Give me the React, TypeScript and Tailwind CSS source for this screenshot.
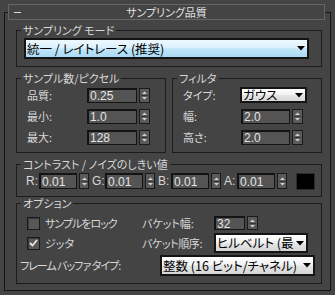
import React from 'react';

const jp = "font-['Noto_Sans_CJK_JP',sans-serif] [font-feature-settings:'palt']";
const num = "font-['Liberation_Sans',Arial,sans-serif]";
const line = 'border border-[#1c1c1c]';

function SpinArrows({ className }: { className: string }) {
  return (
    <div className={`${className} flex items-center justify-center border border-[#1a1a1a] bg-[#5a5a5a]`}>
      <svg width="7" height="11" viewBox="0 0 7 11">
        <polygon points="1,4 3.5,1.5 6,4" fill="#d0d0d0" />
        <line x1="0" y1="5.5" x2="7" y2="5.5" stroke="#3a3a3a" />
        <polygon points="1,7 6,7 3.5,9.5" fill="#d0d0d0" />
      </svg>
    </div>
  );
}

function Spinner({ value, fieldW, spinW, h }: { value: string; fieldW: string; spinW: string; h: string }) {
  return (
    <div className="flex items-center gap-[2px]">
      <div
        className={`${fieldW} ${h} flex items-center border-b border-l-2 border-r border-t-2 border-[#141414] bg-[#545454] pl-[1px] text-[12px] leading-none text-[#e4e4e4] ${num}`}
      >
        {value}
      </div>
      <SpinArrows className={`${spinW} ${h}`} />
    </div>
  );
}

function Dropdown({ text, className, blue, clip }: { text: string; className: string; blue?: boolean; clip?: boolean }) {
  const fill = blue
    ? 'bg-[linear-gradient(to_bottom,#eef8fe_0%,#dcf1fc_45%,#c2e6f9_52%,#a9d9f4_100%)]'
    : 'bg-[linear-gradient(to_bottom,#ffffff_0%,#f2f2f2_45%,#e4e4e4_55%,#d6d6d6_100%)]';
  return (
    <div className={`${className} ${fill} flex items-center border-2 border-[#141414] pl-[1px] pr-[2px] text-black`}>
      <span className={`min-w-0 flex-1 whitespace-nowrap text-[12.5px] leading-[12px] ${clip ? 'overflow-hidden py-[2px]' : ''}`}>
        {text}
      </span>
      <svg width="8" height="5" viewBox="0 0 8 5" className="ml-[2px] shrink-0">
        <polygon points="0,0 8,0 4,4.5" fill="#000" />
      </svg>
    </div>
  );
}

function Check({ checked }: { checked?: boolean }) {
  return (
    <div className="flex h-[13px] w-[13px] items-center justify-center border border-[#1a1a1a] bg-[#585858] shadow-[inset_1px_1px_0_#3a3a3a]">
      {checked && (
        <svg width="9" height="8" viewBox="0 0 9 8">
          <polyline points="1,4 3.5,6.5 8,1" fill="none" stroke="#e6e6e6" strokeWidth="1.8" />
        </svg>
      )}
    </div>
  );
}

function Legend({ text, tight }: { text: string; tight?: boolean }) {
  return (
    <legend className={`ml-[4px] px-[2px] text-[11px] ${tight ? 'leading-[12px]' : 'leading-[14px]'}`}>{text}</legend>
  );
}

export default function App() {
  const samples = [
    ['品質:', '0.25'],
    ['最小:', '1.0'],
    ['最大:', '128'],
  ];
  const channels = [
    ['R:', '0.01'],
    ['G:', '0.01'],
    ['B:', '0.01'],
    ['A:', '0.01'],
  ];

  return (
    <div className={`h-[295px] w-[335px] overflow-hidden bg-[#444444] pt-[4px] text-[11px] text-[#d8d8d8] ${jp}`}>
      <div className="relative z-10 ml-[8px] grid h-[16px] w-[317px] grid-cols-[1fr_auto_1fr] items-center border border-[#666666] bg-[#444444]">
        <div className="ml-[5px] h-[1px] w-[7px] bg-[#dcdcdc]" />
        <div className="leading-[14px] text-[#e0e0e0]">サンプリング品質</div>
        <div />
      </div>

      <div className="-mt-[8px] ml-[4px] h-[279px] w-[327px] border border-[#141414] pl-[11px] pr-[8px] pt-[10px]">
        <fieldset className={line}>
          <Legend text="サンプリング モード" />
          <div className="pb-[7px] pl-[7px] pr-[12px] pt-[1px]">
            <Dropdown blue text="統一 / レイトレース (推奨)" className="h-[21px] w-full" />
          </div>
        </fieldset>

        <div className="mt-[4px] flex gap-[6px]">
          <fieldset className={`w-[150px] min-w-0 ${line}`}>
            <Legend text="サンプル数/ピクセル" />
            <div className="flex flex-col gap-[6px] pb-[7px] pl-[10px] pt-[3px]">
              {samples.map(([label, value]) => (
                <div key={label} className="flex h-[15px] items-center">
                  <span className="w-[60px]">{label}</span>
                  <Spinner value={value} fieldW="w-[50px]" spinW="w-[11px]" h="h-[15px]" />
                </div>
              ))}
            </div>
          </fieldset>

          <fieldset className={`min-w-0 flex-1 ${line}`}>
            <Legend text="フィルタ" />
            <div className="flex flex-col gap-[6px] pb-[7px] pl-[10px] pt-[2px]">
              <div className="flex h-[16px] items-center">
                <span className="w-[57px]">タイプ:</span>
                <Dropdown text="ガウス" className="h-[16px] w-[67px]" />
              </div>
              <div className="flex h-[15px] items-center">
                <span className="w-[58px]">幅:</span>
                <Spinner value="2.0" fieldW="w-[49px]" spinW="w-[11px]" h="h-[15px]" />
              </div>
              <div className="flex h-[15px] items-center">
                <span className="w-[58px]">高さ:</span>
                <Spinner value="2.0" fieldW="w-[49px]" spinW="w-[11px]" h="h-[15px]" />
              </div>
            </div>
          </fieldset>
        </div>

        <fieldset className={`mt-[4px] ${line}`}>
          <Legend text="コントラスト / ノイズのしきい値" />
          <div className="flex h-[25px] items-start pb-[7px] pl-[9px] pt-[2px]">
            <div className="flex h-[16px] items-center gap-[3px]">
              {channels.map(([label, value]) => (
                <div key={label} className="flex items-center">
                  <span className={`w-[13px] text-[12px] leading-none ${num}`}>{label}</span>
                  <Spinner value={value} fieldW="w-[38px]" spinW="w-[10px]" h="h-[16px]" />
                </div>
              ))}
              <div className="ml-[6px] h-[17px] w-[19px] border border-[#2c2c2c] bg-black" />
            </div>
          </div>
        </fieldset>

        <fieldset className={line}>
          <Legend tight text="オプション" />
          <div className="pb-[7px] pt-[7px]">
            <div className="grid grid-cols-[115px_72px_auto] grid-rows-[14px_20px] items-center gap-y-[3px] pl-[10px]">
              <div className="flex items-center gap-[5px]">
                <Check />
                <span className="tracking-[-1px]">サンプルをロック</span>
              </div>
              <span>バケット幅:</span>
              <Spinner value="32" fieldW="w-[31px]" spinW="w-[11px]" h="h-[14px]" />

              <div className="flex items-center gap-[5px]">
                <Check checked />
                <span>ジッタ</span>
              </div>
              <span className="tracking-[-0.4px]">バケット順序:</span>
              <Dropdown clip text="ヒルベルト (最適)" className="h-[20px] w-[94px]" />
            </div>
            <div className="mt-[2px] flex items-center pl-[3px]">
              <span className="w-[140px] tracking-[-1px]">フレーム バッファ タイプ:</span>
              <Dropdown text="整数 (16 ビット/チャネル)" className="h-[21px] w-[155px]" />
            </div>
          </div>
        </fieldset>
      </div>
    </div>
  );
}
